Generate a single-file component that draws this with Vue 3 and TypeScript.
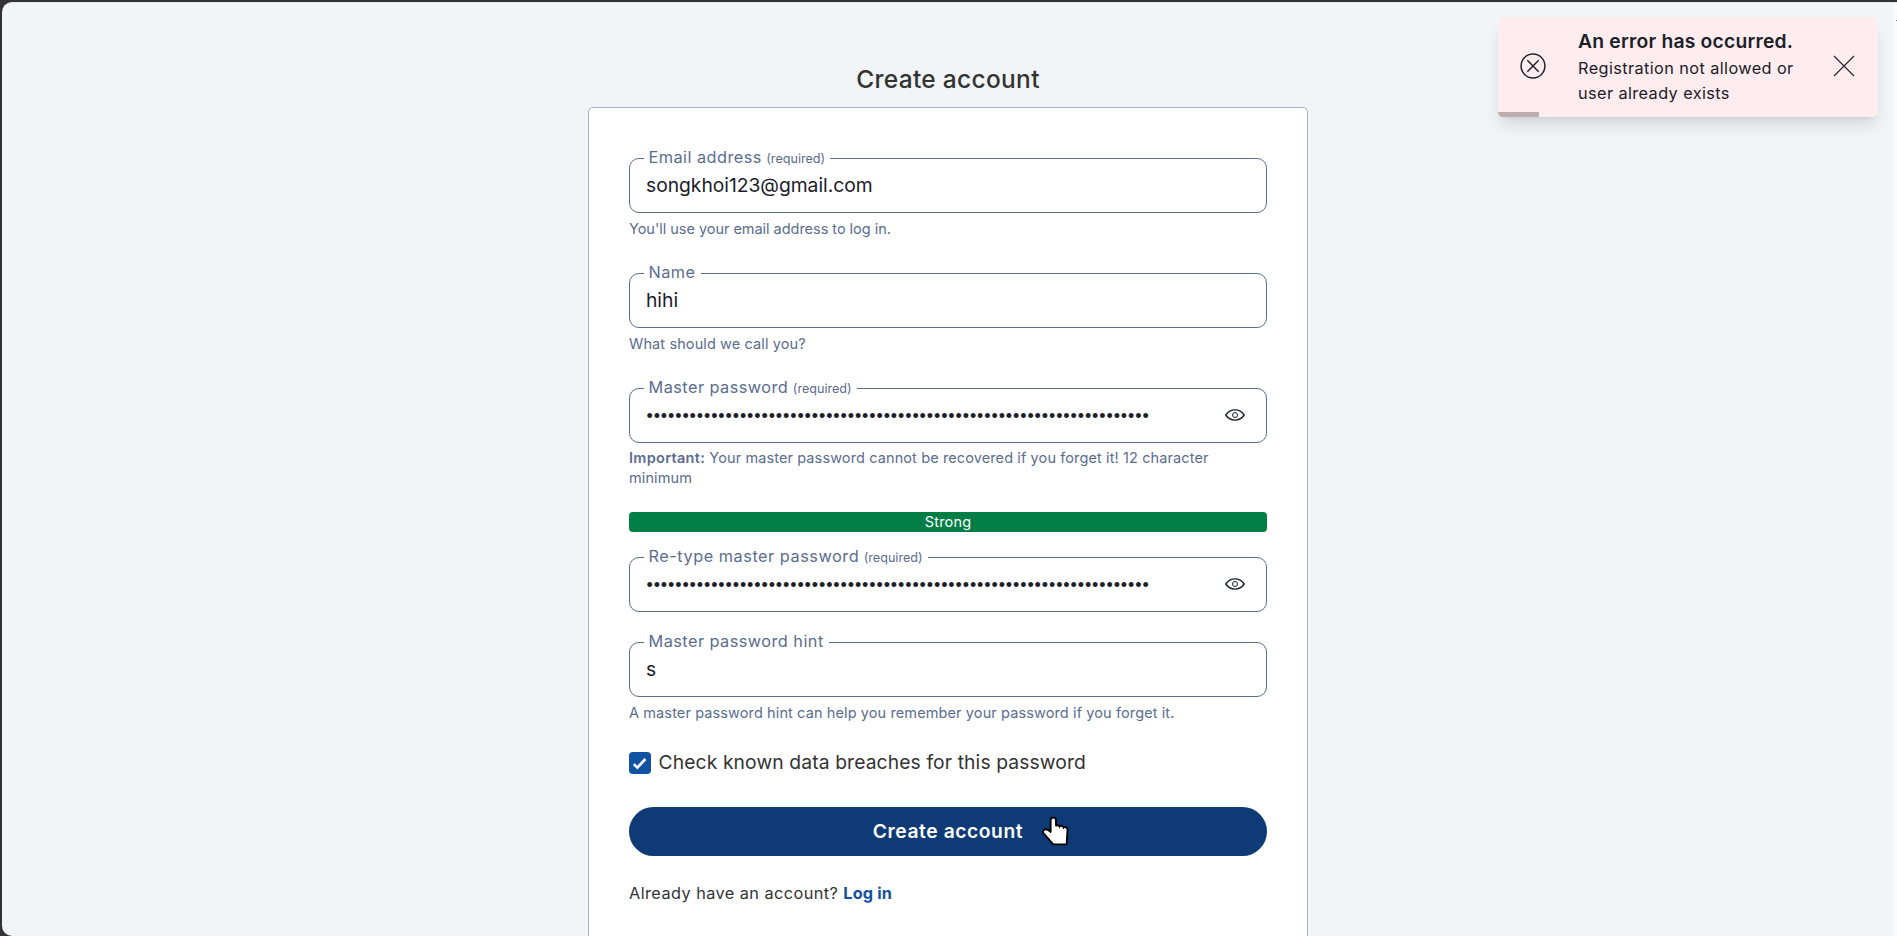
<script setup lang="ts">
interface Field {
  id: string
  label: string
  required?: boolean
  value?: string
  secret?: boolean
  note?: string
  important?: string
}

const PASSWORD_LENGTH = 70

const fields: Field[] = [
  { id: 'email', label: 'Email address', required: true, value: 'songkhoi123@gmail.com', note: "You'll use your email address to log in." },
  { id: 'name', label: 'Name', value: 'hihi', note: 'What should we call you?' },
  {
    id: 'password', label: 'Master password', required: true, secret: true, important: 'Important:',
    note: 'Your master password cannot be recovered if you forget it! 12 character minimum',
  },
  { id: 'retype', label: 'Re-type master password', required: true, secret: true },
  { id: 'hint', label: 'Master password hint', value: 's', note: 'A master password hint can help you remember your password if you forget it.' },
]
</script>

<template>
  <div class="frame">
    <div class="page">
      <main class="content">
        <h1 class="title">Create account</h1>
        <form class="card" @submit.prevent>
          <template v-for="f in fields" :key="f.id">
            <div class="field" :class="'field-' + f.id">
              <div class="box">
                <label class="label">{{ f.label }}<span v-if="f.required" class="required">(required)</span></label>
                <div v-if="f.secret" class="dots"><span v-for="n in PASSWORD_LENGTH" :key="n" class="dot">•</span></div>
                <div v-else class="value">{{ f.value }}</div>
                <svg v-if="f.secret" class="eye" width="20" height="12" viewBox="0 0 20 12" fill="none" stroke="#1b2029">
                  <path d="M.8 6C3 2.7 6.2 .9 10 .9S17 2.7 19.2 6C17 9.3 13.800 11.100 10 11.100S3 9.300 .8 6Z" stroke-width="1.400" />
                  <circle cx="10" cy="6" r="2.500" stroke-width="1" />
                </svg>
              </div>
              <p v-if="f.note" class="note"><b v-if="f.important">{{ f.important }}</b> {{ f.note }}</p>
            </div>
            <div v-if="f.id === 'password'" class="strength">Strong</div>
          </template>
          <div class="check-row">
            <span class="checkbox">
              <svg width="22" height="22" viewBox="0 0 22 22" fill="none" stroke="#fff" stroke-width="2.700"><path d="M4.800 12.100L8.400 15.600L16.400 7" /></svg>
            </span>
            <span>Check known data breaches for this password</span>
          </div>
          <button class="submit" type="submit">Create account</button>
          <div class="footer"><span>Already have an account?</span><a class="login">Log in</a></div>
        </form>
      </main>
      <div class="scroll-track"><span class="scroll-mark"></span></div>
    </div>

    <aside class="toast">
      <svg class="toast-icon" width="26" height="26" viewBox="0 0 26 26" fill="none" stroke="#1f242e" stroke-width="1.500">
        <circle cx="13" cy="13" r="11.900" />
        <path d="M7.300 7.300L18.700 18.700M18.700 7.300L7.300 18.700" />
      </svg>
      <div class="toast-text">
        <strong class="toast-title">An error has occurred.</strong>
        <span class="toast-line">Registration not allowed or<br />user already exists</span>
      </div>
      <svg class="toast-close" width="22" height="22" viewBox="0 0 22 22" fill="none" stroke="#1f242e" stroke-width="1.100">
        <path d="M1 1L21 21M21 1L1 21" />
      </svg>
      <div class="toast-progress"></div>
    </aside>

    <svg class="pointer" width="28" height="30" viewBox="0 0 28 30">
      <path
        d="M9.600 16V4.200C9.600 .6 15 .6 15 4.200V9.600C16 9 18 9.100 18.600 10.200C20 9.600 21.700 9.900 22.400 11.100C24.500 10.600 26.500 11.500 26.500 13.800L25.700 28.400H12.400C9 25.500 6 20.800 3.200 18.100C.4 15.700 3 12.600 6 13.500C7.500 14 8.400 15 9.600 16Z"
        fill="#fff" stroke="#000" stroke-width="1.900" stroke-linejoin="round"
      />
      <path d="M18.600 10.200V12.200M22.400 11.100V13" stroke="#000" stroke-width="1" fill="none" />
    </svg>
  </div>
</template>

<style>
body {
  margin: 0;
  overflow: hidden;
}
</style>

<style scoped>
.frame {
  position: relative;
  box-sizing: border-box;
  width: 1897px;
  height: 936px;
  padding: 2px 0 0 2px;
  overflow: hidden;
  background: #333336;
  font-family: Inter, "Open Sans", sans-serif;
  color: #333;
}
.page {
  box-sizing: border-box;
  display: flex;
  width: 1895px;
  height: 934px;
  overflow: hidden;
  border-top: 1px solid #e3e6e9;
  border-radius: 10px 0 0 10px;
  background: #f1f5f8;
}
.content {
  display: flex;
  flex: 1;
  flex-direction: column;
  align-items: center;
  padding-left: 1px;
}
.title {
  margin: 56px 0 8px;
  font-size: 24.5px;
  font-weight: 500;
  line-height: 40px;
  letter-spacing: 0.3px;
}
.card {
  box-sizing: border-box;
  flex: none;
  width: 720px;
  height: 860px;
  padding: 50px 40px 0;
  border: 1px solid #a5b1cb;
  border-radius: 5px;
  background: #fff;
}
.field {
  margin-bottom: 34px;
}
.field-password {
  margin-bottom: 24px;
}
.field-password .note {
  padding-top: 5px;
}
.field-retype {
  margin-bottom: 30px;
}
.field-hint {
  margin-bottom: 29px;
}
.box {
  position: relative;
  box-sizing: border-box;
  display: flex;
  align-items: center;
  justify-content: space-between;
  height: 55px;
  padding: 0 21px 0 16px;
  border: 1px solid #5a6d91;
  border-radius: 10px;
}
.label {
  position: absolute;
  left: 14px;
  top: -14px;
  padding: 0 5px 0 4.500px;
  background: #fff;
  color: #5a6d91;
  font-size: 16.3px;
  line-height: 24px;
  letter-spacing: 0.46px;
  white-space: nowrap;
}
.field-retype .label {
  letter-spacing: 0.53px;
}
.label .required {
  margin-left: 4.500px;
  font-size: 12.6px;
  letter-spacing: 0;
}
.value {
  margin-bottom: 1px;
  color: #1b2029;
  font-size: 19.3px;
  line-height: 28px;
  letter-spacing: -0.03px;
}
.dots {
  display: flex;
  height: 28px;
  color: #1b2029;
  font-family: "Liberation Sans", sans-serif;
  font-size: 18px;
  line-height: 28px;
}
.dot {
  display: flex;
  justify-content: center;
  width: 7.2px;
}
.eye {
  flex: none;
  margin-bottom: 1px;
}
.note {
  margin: 0;
  padding-top: 6px;
  color: #5a6d91;
  font-size: 14.5px;
  line-height: 20px;
  letter-spacing: 0.11px;
}
.field-email .note {
  letter-spacing: -0.03px;
}
.note b {
  font-weight: 600;
  letter-spacing: 0.3px;
}
.strength {
  height: 20px;
  margin-bottom: 25px;
  border-radius: 4px;
  background: #017e45;
  color: #fff;
  font-size: 14.5px;
  line-height: 20px;
  letter-spacing: 0.2px;
  text-align: center;
}
.check-row {
  display: flex;
  gap: 7.500px;
  height: 22px;
  margin-bottom: 33px;
  font-size: 19.3px;
  line-height: 20px;
  letter-spacing: 0.11px;
}
.checkbox {
  display: flex;
  width: 22px;
  height: 22px;
  border-radius: 4px;
  background: #1252a3;
}
.submit {
  display: block;
  width: 100%;
  height: 49px;
  padding: 0;
  border: 0;
  border-radius: 25px;
  background: #0e3b76;
  color: #fff;
  font: 600 19.3px/49px Inter, sans-serif;
  letter-spacing: 0.55px;
}
.footer {
  display: flex;
  gap: 5px;
  margin-top: 26px;
  font-size: 16.3px;
  line-height: 22px;
  letter-spacing: 0.44px;
}
.login {
  color: #1252a3;
  font-weight: 700;
  letter-spacing: 0.15px;
}
.scroll-track {
  width: 4px;
  background: #fafafb;
}
.scroll-mark {
  display: block;
  width: 1px;
  height: 1px;
  margin: 17px 0 0 3px;
  background: #777;
}
.toast {
  position: absolute;
  top: 17px;
  left: 1498px;
  box-sizing: border-box;
  display: flex;
  align-items: center;
  width: 380px;
  height: 100px;
  padding: 0 22px;
  overflow: hidden;
  border-radius: 5px;
  background: #ffecef;
  box-shadow: 0 11px 16px -2px rgb(0 0 0 / 10%), 0 4px 6px -4px rgb(0 0 0 / 10%);
  color: #1b2029;
}
.toast-icon,
.toast-close {
  flex: none;
  margin-bottom: 3px;
}
.toast-close {
  margin-right: 1px;
}
.toast-text {
  display: flex;
  flex: 1;
  flex-direction: column;
  padding: 0 0 1px 32px;
}
.toast-title {
  font-size: 19.3px;
  font-weight: 600;
  line-height: 28px;
  letter-spacing: 0.22px;
}
.toast-line {
  padding-top: 1px;
  font-size: 16.3px;
  line-height: 25px;
  letter-spacing: 0.4px;
}
.toast-progress {
  position: absolute;
  bottom: 0;
  left: 0;
  width: 41px;
  height: 5px;
  background: #bcaeb1;
}
.pointer {
  position: absolute;
  left: 1041px;
  top: 816px;
}
</style>
